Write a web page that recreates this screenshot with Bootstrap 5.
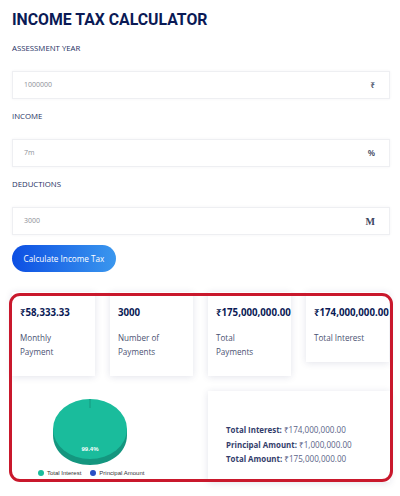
<!doctype html>
<html lang="en">
<head>
<meta charset="utf-8">
<link href="https://cdn.jsdelivr.net/npm/bootstrap@5.3.0/dist/css/bootstrap.min.css" rel="stylesheet">
<style>
html,body{height:496px;overflow:hidden;background:#fff}
body{font-family:"Open Sans","Noto Sans",sans-serif;color:#0b1f5c}
.calc-page{padding:0 10px 0 12px}
.calc-title{font-family:Roboto,sans-serif;font-weight:700;font-size:15.8px;line-height:20px;color:#0a1a55;margin:10px 0 0}
.calc-label{display:block;font-size:7.8px;line-height:12px;font-weight:500;color:#1e2f63;margin:0}
.lbl-a{margin-top:12px}
.lbl-b{margin-top:11px}
.calc-field{height:28px;margin-top:17px;border:1px solid #eeeff2;display:flex;align-items:center;justify-content:space-between;padding:0 14px 0 11px;box-shadow:0 0 3px rgba(30,40,90,.05);background:#fff}
.calc-field .val{font-size:7px;color:#8d8f97}
.calc-field .unit{font-size:8.5px;color:#3c4560;font-weight:600}
.unit-serif{font-family:"Liberation Serif",serif;font-size:10px!important}
.calc-btn{display:inline-block;margin-top:10px;width:104px;height:27px;line-height:27px;padding:0;border:0;border-radius:14px;background:linear-gradient(90deg,#0d4fe3,#3a97ee);color:#fff;font-size:8.2px;font-weight:500;text-align:center}
.result-zone{position:relative;margin-top:20px;height:190px}
.frame-mark{position:absolute;left:-3px;right:-3px;top:1px;height:189px;border:3px solid #c9182c;border-radius:11px;pointer-events:none}
.stat-row{display:flex;gap:15px;align-items:flex-start}
.stat-box{flex:0 0 83px;height:84px;background:#fff;box-shadow:0 1px 7px rgba(30,40,90,.13);padding:14px 0 0 8px}
.stat-box.short{height:70px}
.stat-num{font-size:9.7px;font-weight:700;color:#0a1a55;line-height:14px;white-space:nowrap}
.stat-cap{font-size:8.1px;line-height:14px;color:#4a5272;margin-top:11px}
.lower-row{display:flex;margin-top:15px}
.pie-col{width:196px;flex:0 0 196px;padding-left:23px}
.pie-col svg{display:block}
.pie-pct{font-family:"Liberation Sans",sans-serif;font-size:6px;font-weight:700;fill:#fff}
.legend-row{display:flex;gap:9px;font-family:"Liberation Sans",sans-serif;font-size:6px;color:#333;margin:3px 0 0 3px;align-items:center;line-height:8px}
.legend-row i{display:inline-block;width:6px;height:6px;border-radius:50%;margin-right:3px;vertical-align:-1px}
.sum-box{flex:1;height:91px;background:#fff;box-shadow:0 1px 7px rgba(30,40,90,.13);padding:32px 0 0 18px;font-size:8.1px;line-height:14.6px;color:#5b6488}
.sum-box b{color:#333d6b;font-weight:700;font-size:7.9px}
</style>
</head>
<body>
<main class="calc-page">
  <h1 class="calc-title">INCOME TAX CALCULATOR</h1>
  <label class="calc-label lbl-a">ASSESSMENT YEAR</label>
  <div class="calc-field"><span class="val">1000000</span><span class="unit">₹</span></div>
  <label class="calc-label lbl-b">INCOME</label>
  <div class="calc-field"><span class="val">7m</span><span class="unit">%</span></div>
  <label class="calc-label lbl-b">DEDUCTIONS</label>
  <div class="calc-field"><span class="val">3000</span><span class="unit unit-serif">M</span></div>
  <button class="btn calc-btn" type="button">Calculate Income Tax</button>
  <section class="result-zone">
    <div class="stat-row">
      <div class="stat-box"><div class="stat-num">₹58,333.33</div><div class="stat-cap">Monthly<br>Payment</div></div>
      <div class="stat-box"><div class="stat-num">3000</div><div class="stat-cap">Number of<br>Payments</div></div>
      <div class="stat-box"><div class="stat-num">₹175,000,000.00</div><div class="stat-cap">Total<br>Payments</div></div>
      <div class="stat-box short"><div class="stat-num">₹174,000,000.00</div><div class="stat-cap">Total Interest</div></div>
    </div>
    <div class="lower-row">
      <div class="pie-col">
        <svg width="110" height="75" viewBox="0 0 110 75">
          <path d="M18 38V44C18 62 35 74 55 74S92 62 92 44V38Z" fill="#14967f"/>
          <ellipse cx="55" cy="38" rx="37" ry="30" fill="#1abc9c"/>
          <path d="M55 8V17" stroke="#14806f" stroke-width=".6"/>
          <text class="pie-pct" x="55" y="60" text-anchor="middle">99.4%</text>
        </svg>
        <div class="legend-row"><span><i style="background:#1abc9c"></i>Total Interest</span><span><i style="background:#2a4fc4"></i>Principal Amount</span></div>
      </div>
      <div class="sum-box">
        <div><b>Total Interest:</b> ₹174,000,000.00</div>
        <div><b>Principal Amount:</b> ₹1,000,000.00</div>
        <div><b>Total Amount:</b> ₹175,000,000.00</div>
      </div>
    </div>
    <div class="frame-mark"></div>
  </section>
</main>
<script src="https://cdn.jsdelivr.net/npm/bootstrap@5.3.0/dist/js/bootstrap.bundle.min.js"></script>
</body>
</html>
